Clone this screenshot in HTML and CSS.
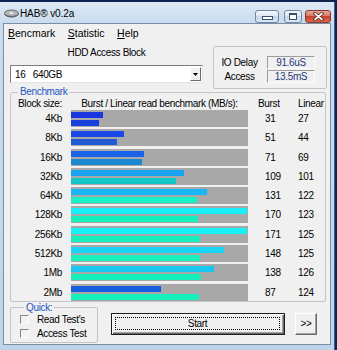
FILE: index.html
```html
<!DOCTYPE html>
<html>
<head>
<meta charset="utf-8">
<link rel="stylesheet" href="styles.css">
</head>
<body>
<div class="window">
  <div class="titlebar">
    <svg class="appicon" width="15" height="9" viewBox="0 0 15 9">
      <ellipse cx="7.5" cy="5.2" rx="7" ry="3.4" fill="#5e5e5e"/>
      <ellipse cx="7.5" cy="4.2" rx="7" ry="3.2" fill="#b4b4b4" stroke="#585858" stroke-width="0.8"/>
      <ellipse cx="7.5" cy="4" rx="2.2" ry="1" fill="#ececec"/>
    </svg>
    <span class="title">HAB® v0.2a</span>
    <div class="capbtns">
      <div class="cbtn min"><span class="g-min"></span></div>
      <div class="cbtn max"><span class="g-max"></span></div>
      <div class="cbtn close">
        <svg width="11" height="9" viewBox="0 0 11 9">
          <path d="M2 1.5L9 7.5M9 1.5L2 7.5" stroke="#5b1d12" stroke-width="3.4" stroke-linecap="round"/>
          <path d="M2 1.5L9 7.5M9 1.5L2 7.5" stroke="#ffffff" stroke-width="1.7" stroke-linecap="round"/>
        </svg>
      </div>
    </div>
  </div>
  <div class="client">
    <div class="menubar">
      <span><u>B</u>encmark</span>
      <span><u>S</u>tatistic</span>
      <span><u>H</u>elp</span>
    </div>
    <div class="top">
      <div class="hdd">
        <div class="hdd-label">HDD Access Block</div>
        <div class="combo">
          <span class="combo-text">16   640GB</span>
          <span class="drop"><svg width="5" height="3" viewBox="0 0 5 3"><path d="M0 0H5L2.5 3Z" fill="#000"/></svg></span>
        </div>
      </div>
      <div class="iobox">
        <div class="io-row"><span class="io-label">IO Delay</span><span class="io-val">91.6uS</span></div>
        <div class="io-row"><span class="io-label">Access</span><span class="io-val">13.5mS</span></div>
      </div>
    </div>
    <fieldset class="bench">
      <legend>Benchmark</legend>
      <div class="bhead">
        <div class="h-size">Block size:</div>
        <div class="h-bar">Burst / Linear read benchmark (MB/s):</div>
        <div class="h-burst">Burst</div>
        <div class="h-linear">Linear</div>
      </div>
      <div class="rows">
        <div class="lbl">4Kb</div>
        <div class="bar"><div class="b1" style="width:32px;background:#1a36e0"></div><div class="b2" style="width:28px;background:#1a40dc"></div></div>
        <div class="v1">31</div><div class="v2">27</div>

        <div class="lbl">8Kb</div>
        <div class="bar"><div class="b1" style="width:53px;background:#1a4ae6"></div><div class="b2" style="width:46px;background:#1f5ad2"></div></div>
        <div class="v1">51</div><div class="v2">44</div>

        <div class="lbl">16Kb</div>
        <div class="bar"><div class="b1" style="width:73px;background:#1a62e8"></div><div class="b2" style="width:71px;background:#1d88d2"></div></div>
        <div class="v1">71</div><div class="v2">69</div>

        <div class="lbl">32Kb</div>
        <div class="bar"><div class="b1" style="width:113px;background:#18a2f2"></div><div class="b2" style="width:105px;background:#12c6c6"></div></div>
        <div class="v1">109</div><div class="v2">101</div>

        <div class="lbl">64Kb</div>
        <div class="bar"><div class="b1" style="width:136px;background:#18b6f6"></div><div class="b2" style="width:126px;background:#18f0c4"></div></div>
        <div class="v1">131</div><div class="v2">122</div>

        <div class="lbl">128Kb</div>
        <div class="bar"><div class="b1" style="width:176px;background:#18eef8"></div><div class="b2" style="width:127px;background:#18f0bc"></div></div>
        <div class="v1">170</div><div class="v2">123</div>

        <div class="lbl">256Kb</div>
        <div class="bar"><div class="b1" style="width:176px;background:#18f0f8"></div><div class="b2" style="width:129px;background:#18f0bc"></div></div>
        <div class="v1">171</div><div class="v2">125</div>

        <div class="lbl">512Kb</div>
        <div class="bar"><div class="b1" style="width:153px;background:#18d4f6"></div><div class="b2" style="width:129px;background:#18f0bc"></div></div>
        <div class="v1">148</div><div class="v2">125</div>

        <div class="lbl">1Mb</div>
        <div class="bar"><div class="b1" style="width:143px;background:#18c6f2"></div><div class="b2" style="width:130px;background:#18f0bc"></div></div>
        <div class="v1">138</div><div class="v2">126</div>

        <div class="lbl">2Mb</div>
        <div class="bar"><div class="b1" style="width:90px;background:#1a5ee0"></div><div class="b2" style="width:128px;background:#18f0bc"></div></div>
        <div class="v1">87</div><div class="v2">124</div>
      </div>
    </fieldset>
    <div class="bottom">
      <fieldset class="quick">
        <legend>Quick:</legend>
        <div class="cbrow"><span class="cb"></span><span>Read Test's</span></div>
        <div class="cbrow"><span class="cb"></span><span>Access Test</span></div>
      </fieldset>
      <div class="start"><div class="focus">Start</div></div>
      <div class="more">&gt;&gt;</div>
    </div>
  </div>
</div>
</body>
</html>
```

FILE: styles.css
```css
* { box-sizing: border-box; }
html, body { margin: 0; padding: 0; }
body {
  width: 337px;
  height: 350px;
  overflow: hidden;
  background: #0f2450;
  font-family: "Liberation Sans", Arial, sans-serif;
  color: #000;
}
.window {
  margin-top: 2px;
  width: 335px;
  height: 348px;
  padding: 0 3px;
  border-right: 1px solid #3f5f8a;
  background: linear-gradient(#dde9f6 0, #c9dbee 21px, #bfd4eb 100%);
  display: flex;
  flex-direction: column;
}
.titlebar {
  height: 21px;
  flex: none;
  display: flex;
  align-items: center;
}
.appicon { margin-left: 1px; margin-right: 1px; margin-top: 2px; }
.title {
  font-size: 10px;
  padding-top: 2px;
  letter-spacing: -0.1px;
}
.capbtns {
  margin-left: auto;
  align-self: stretch;
  display: flex;
  align-items: flex-end;
}
.cbtn {
  height: 13px;
  border: 1px solid #6f86a6;
  border-radius: 3px;
  background: linear-gradient(#f4f7fb, #dbe5f1 50%, #c8d8ec 50%, #d9e6f4);
  display: flex;
  justify-content: center;
}
.min { width: 24px; align-items: flex-end; padding-bottom: 2px; }
.max { width: 18px; margin-left: 5px; align-items: center; padding-bottom: 1px; }
.close {
  width: 26px;
  margin-left: 3px;
  align-items: center;
  border-color: #83392c;
  background: linear-gradient(#eaa898, #d77560 50%, #c7442c 50%, #d86a52);
}
.g-min {
  width: 11px;
  height: 4px;
  background: #fff;
  border: 1px solid #3b4f6c;
}
.g-max {
  width: 8px;
  height: 7px;
  background: #fff;
  border: 1px solid #3b4f6c;
  border-top-width: 2px;
}
.client {
  flex: none;
  height: 322px;
  background: #f0f0f0;
  border: 1px solid #7b8ea8;
  display: flex;
  flex-direction: column;
}
.menubar {
  height: 17px;
  flex: none;
  display: flex;
  align-items: center;
  gap: 12.5px;
  padding-left: 4px;
  font-size: 10.5px;
}
.top {
  height: 45px;
  flex: none;
  display: flex;
  align-items: flex-start;
  font-size: 10px;
  letter-spacing: -0.35px;
}
.hdd { margin-left: 6px; width: 193px; }
.hdd-label {
  margin-top: 6px;
  height: 12px;
  line-height: 12px;
  text-align: center;
}
.combo {
  margin-top: 6px;
  height: 18px;
  background: #fff;
  border: 1px solid;
  border-color: #7d7d7d #e4e4e4 #e4e4e4 #7d7d7d;
  display: flex;
  align-items: center;
}
.combo-text {
  flex: 1;
  padding-left: 4px;
  white-space: pre;
}
.drop {
  width: 11px;
  height: 14px;
  margin-right: 1px;
  background: #f0f0f0;
  border: 1px solid;
  border-color: #fff #6a6a6a #6a6a6a #fff;
  display: flex;
  align-items: center;
  justify-content: center;
}
.iobox {
  margin-left: 10px;
  margin-top: 5px;
  width: 114px;
  height: 43px;
  flex: none;
  border: 1px solid #c4c4c4;
  border-radius: 2px;
  padding-top: 9px;
}
.io-row {
  display: flex;
  height: 13px;
  margin-bottom: 1px;
}
.io-label {
  width: 51px;
  text-align: center;
  line-height: 13px;
}
.io-val {
  margin-left: 2px;
  width: 48px;
  height: 13px;
  border: 1px solid;
  border-color: #9c9c9c #fdfdfd #fdfdfd #9c9c9c;
  text-align: center;
  line-height: 11px;
  color: #1f3a78;
}
fieldset {
  margin: 0;
  padding: 0;
  min-width: 0;
  border: 1px solid #c4c4c4;
  border-radius: 2px;
}
legend {
  padding: 0 2px;
  color: #2155c3;
  font-size: 10px;
  line-height: 12px;
  letter-spacing: -0.35px;
}
.bench {
  flex: none;
  margin: 0 4px 0 6px;
  font-size: 10px;
  letter-spacing: -0.35px;
}
.bench legend { margin-left: 7px; }
.bhead {
  display: grid;
  grid-template-columns: 60px 177px 50px 27px;
  height: 12px;
  line-height: 12px;
}
.h-size { text-align: right; padding-right: 9px; }
.h-bar { text-align: center; }
.h-burst { padding-left: 10px; }
.h-linear { padding-left: 0; }
.rows {
  display: grid;
  grid-template-columns: 60px 177px 50px 27px;
  grid-auto-rows: 17px;
  row-gap: 2.3px;
  line-height: 17px;
}
.lbl { text-align: right; padding-right: 9px; }
.bar {
  background: #a8a8a8;
  padding-top: 2px;
}
.b1 { height: 6px; }
.b2 { height: 6px; margin-top: 2px; }
.v1 { padding-left: 17px; }
.v2 { padding-left: 0; }
.bottom {
  flex: none;
  display: flex;
  align-items: flex-start;
  font-size: 10px;
  letter-spacing: -0.35px;
}
.quick {
  margin-left: 6px;
  width: 88px;
  padding: 0 0 1px 9px;
}
.quick legend { margin-left: 4px; line-height: 11px; }
.cbrow {
  height: 14px;
  display: flex;
  align-items: center;
}
.cb {
  width: 9px;
  height: 9px;
  margin-right: 8px;
  border: 1px solid;
  border-color: #858585 #fbfbfb #fbfbfb #858585;
  background: #f2f2f2;
}
.start {
  margin-left: 13px;
  margin-top: 11.3px;
  width: 174px;
  height: 22px;
  border: 1px solid #1c1c1c;
  background: #f0f0f0;
  box-shadow: inset 1px 1px 0 #fff, inset -1px -1px 0 #6a6a6a, inset -2px -2px 0 #a0a0a0;
  padding: 3px 4px 4px 3px;
  display: flex;
}
.focus {
  flex: 1;
  border: 1px dotted #000;
  display: flex;
  align-items: center;
  justify-content: center;
}
.more {
  margin-left: 10px;
  margin-top: 11.3px;
  width: 22px;
  height: 22px;
  background: #f0f0f0;
  border: 1px solid;
  border-color: #fff #696969 #696969 #fff;
  box-shadow: inset -1px -1px 0 #a0a0a0;
  display: flex;
  align-items: center;
  justify-content: center;
}
```
